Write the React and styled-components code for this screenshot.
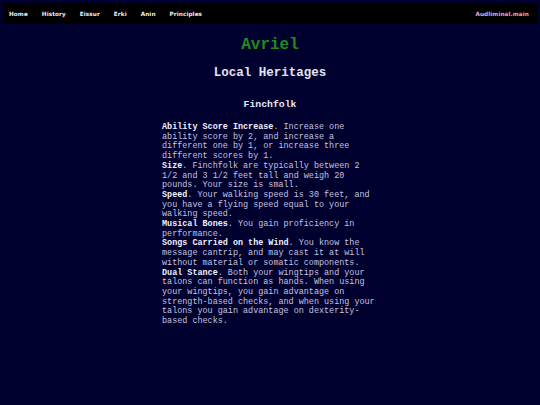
import React from "react";
import styled, { createGlobalStyle } from "styled-components";

const Global = createGlobalStyle`
  html, body { margin: 0; padding: 0; background: #00002e; }
  body { min-height: 405px; }
`;

const Page = styled.div`
  min-height: 405px;
  background: #00002e;
  padding: 3px;
  box-sizing: border-box;
  font-family: "Courier New", "Nimbus Mono PS", "FreeMono", "Liberation Mono", monospace;
`;

const Nav = styled.nav`
  display: flex;
  align-items: center;
  justify-content: space-between;
  background: #000000;
  height: 21px;
  padding: 0 8px 0 6px;
`;

const NavLinks = styled.div`
  display: flex;
  gap: 14px;
`;

const NavLink = styled.span`
  font-family: "DejaVu Sans", sans-serif;
  font-size: 5.7px;
  font-weight: 600;
  letter-spacing: 0.1px;
  color: ${(p) => (p.$accent ? "#e0a8d8" : "#f0f0f0")};
`;

const Main = styled.main`
  display: flex;
  flex-direction: column;
  align-items: center;
`;

const Title = styled.h1`
  margin: 11px 0 0;
  font-size: 16px;
  font-weight: bold;
  color: #1f8c1f;
  line-height: 20px;
`;

const Subtitle = styled.h2`
  margin: 11px 0 0;
  font-size: 12.5px;
  font-weight: bold;
  color: #e4e4f4;
  line-height: 15px;
`;

const Heading = styled.h3`
  margin: 18px 0 0;
  font-size: 9.8px;
  font-weight: bold;
  color: #e8e8f8;
  line-height: 12px;
`;

const Body = styled.div`
  width: 216px;
  margin-top: 12px;
  font-size: 8.45px;
  line-height: 9.7px;
  color: #c4c4e0;
`;

const Para = styled.p`
  margin: 0;
`;

const Term = styled.b`
  color: #f0f0ff;
`;

const traits = [
  ["Ability Score Increase", "Increase one ability score by 2, and increase a different one by 1, or increase three different scores by 1."],
  ["Size", "Finchfolk are typically between 2 1/2 and 3 1/2 feet tall and weigh 20 pounds. Your size is small."],
  ["Speed", "Your walking speed is 30 feet, and you have a flying speed equal to your walking speed."],
  ["Musical Bones", "You gain proficiency in performance."],
  ["Songs Carried on the Wind", "You know the message cantrip, and may cast it at will without material or somatic components."],
  ["Dual Stance", "Both your wingtips and your talons can function as hands. When using your wingtips, you gain advantage on strength-based checks, and when using your talons you gain advantage on dexterity-based checks."],
];

export default function App() {
  return (
    <>
      <Global />
      <Page>
        <Nav>
          <NavLinks>
            {["Home", "History", "Eissur", "Erki", "Anin", "Principles"].map((n) => (
              <NavLink key={n}>{n}</NavLink>
            ))}
          </NavLinks>
          <NavLink $accent>Audliminal.main</NavLink>
        </Nav>
        <Main>
          <Title>Avriel</Title>
          <Subtitle>Local Heritages</Subtitle>
          <Heading>Finchfolk</Heading>
          <Body>
            {traits.map(([t, d]) => (
              <Para key={t}>
                <Term>{t}</Term>. {d}
              </Para>
            ))}
          </Body>
        </Main>
      </Page>
    </>
  );
}
